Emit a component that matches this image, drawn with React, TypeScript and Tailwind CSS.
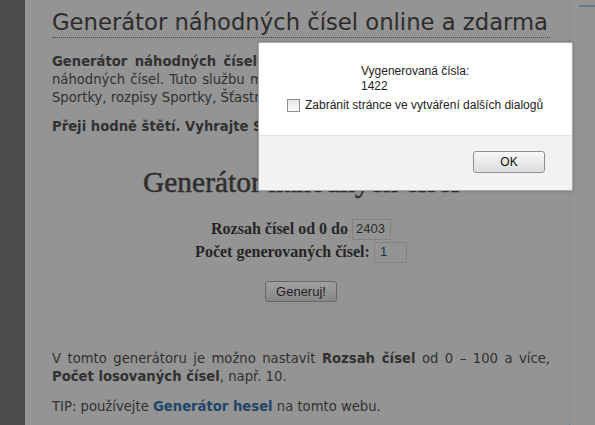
import React from 'react'

const sans = { fontFamily: '"DejaVu Sans", Verdana, sans-serif' }

function AlertDialog() {
  return (
    <div className="absolute left-[258px] top-[42px] flex h-[149px] w-[315px] flex-col overflow-hidden rounded-[2px] border border-[#a9a9a9] bg-white font-['Liberation_Sans',Arial,sans-serif] text-[12px] text-[#222] shadow-[0_0_3px_rgba(0,0,0,0.25)]">
      <div className="h-[93px] border-b border-[#e3e3e3] pt-[21px]">
        <div className="pl-[102px] leading-[15px]">
          <div>Vygenerovaná čísla:</div>
          <div>1422</div>
        </div>
        <label className="mt-[4px] flex items-center gap-[5px] pl-[28px] leading-[15px]">
          <span className="h-[13px] w-[13px] border border-[#8e8e8e] bg-gradient-to-b from-[#e6e6e6] to-[#fbfbfb]" />
          <span>Zabránit stránce ve vytváření dalších dialogů</span>
        </label>
      </div>
      <div className="flex flex-1 justify-end bg-[#f2f2f2] pr-[27px] pt-[15px]">
        <button className="h-[22px] w-[72px] rounded-[3px] border border-[#8f8f8f] bg-gradient-to-b from-[#f8f8f8] to-[#dcdcdc] text-[12px] text-[#111]">
          OK
        </button>
      </div>
    </div>
  )
}

export default function App() {
  return (
    <div className="relative flex h-[425px] w-[595px] overflow-hidden bg-[#949494]">
      <div className="w-[25px] shrink-0 bg-[#4b4b4b]" />

      <main className="w-[544px] shrink-0 pl-[27px] pr-[19px] pt-[10px] text-[#313131]" style={sans}>
        <h1 className="border-b border-dotted border-[#444] pb-[3px] text-[22.7px] leading-[24px] text-[#2c2c2c]">
          Generátor náhodných čísel online a zdarma
        </h1>

        <p className="mt-[15px] text-justify text-[13.2px] leading-[18px]">
          <b>Generátor náhodných čísel online</b> slouží ke snadnému vygenerování náhodných čísel. Tuto službu můžete využít například pro snadné tipování
          Sportky, rozpisy Sportky, Šťastných 10 a dalších her.
        </p>
        <p className="mt-[11px] text-[13.2px] font-bold leading-[18px]">
          Přeji hodně štětí. Vyhrajte Sportku i Eurojackpot.
        </p>

        <h2 className="mt-[30px] text-center font-['Liberation_Serif','Times_New_Roman',serif] text-[29.5px] leading-[33px] text-[#2e2e2e] [-webkit-text-stroke:0.5px_#2e2e2e]">
          Generátor náhodných čísel
        </h2>

        <form className="mt-[19px] flex flex-col items-center font-['Liberation_Serif','Times_New_Roman',serif] text-[16px] font-bold text-[#262626]">
          <div className="flex h-[22px] items-center gap-[4px]">
            <span>Rozsah čísel od 0 do</span>
            <span className="flex h-[21px] w-[39px] items-center border border-[#828282] px-[3px] font-['Liberation_Sans',Arial,sans-serif] text-[13px] font-normal text-[#2a2a2a]">
              2403
            </span>
          </div>
          <div className="mt-[1px] flex h-[22px] items-center gap-[4px]">
            <span>Počet generovaných čísel:</span>
            <span className="flex h-[21px] w-[33px] items-center border border-[#828282] px-[5px] font-['Liberation_Sans',Arial,sans-serif] text-[13px] font-normal text-[#1d3550]">
              1
            </span>
          </div>
          <button
            type="button"
            className="mt-[18px] h-[21px] w-[72px] rounded-[3px] border border-[#676767] bg-gradient-to-b from-[#a0a0a0] to-[#878787] font-['Liberation_Sans',Arial,sans-serif] text-[13px] font-normal text-[#1e1e1e]"
          >
            Generuj!
          </button>
        </form>

        <p className="mt-[48px] text-justify text-[13.2px] leading-[18px]">
          V tomto generátoru je možno nastavit <b>Rozsah čísel</b> od 0 – 100 a více, <b>Počet losovaných čísel</b>, např. 10.
        </p>
        <p className="mt-[12px] text-[13.2px] leading-[18px]">
          TIP: používejte <a className="font-bold text-[#1f4667]">Generátor hesel</a> na tomto webu.
        </p>
      </main>

      <div className="flex-1 border-l border-dotted border-[#6f8296] pl-[9px] pt-[5px]">
        <div className="h-[2px] bg-[#6b7b8c]" />
      </div>

      <AlertDialog />
    </div>
  )
}
